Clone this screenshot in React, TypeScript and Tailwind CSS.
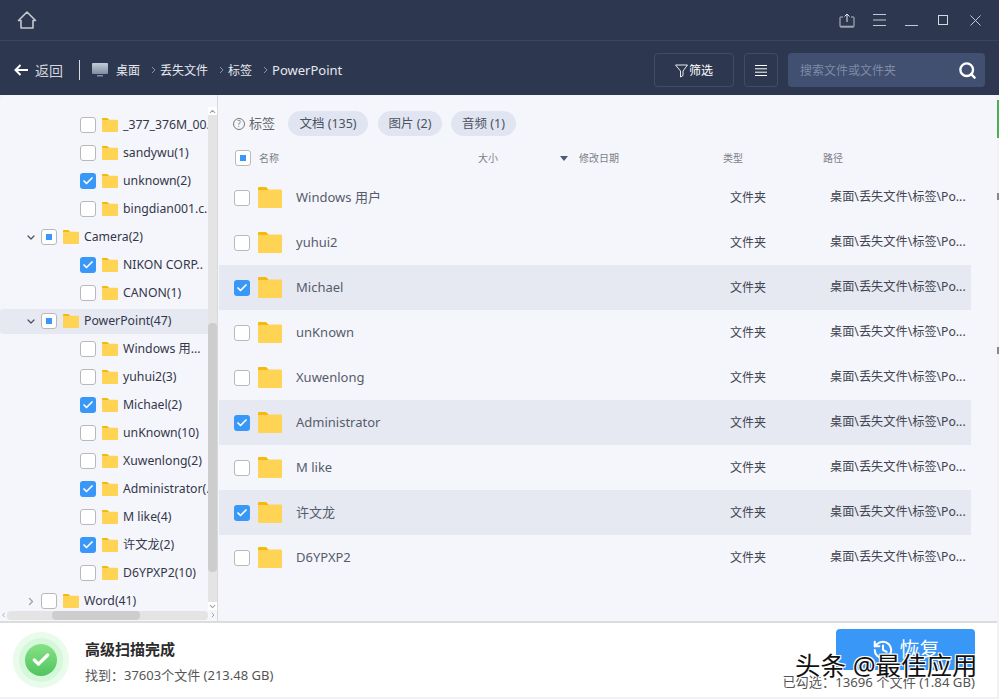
import { Check, ChevronDown, ChevronLeft, ChevronRight, ChevronUp, History, Search } from 'lucide-react';

type CheckState = 'none' | 'checked' | 'partial';
type TreeRow = { name: string; check: CheckState; parent?: boolean; open?: boolean; active?: boolean };

const treeRows: TreeRow[] = [
  { name: '_377_376M_00.', check: 'none' },
  { name: 'sandywu(1)', check: 'none' },
  { name: 'unknown(2)', check: 'checked' },
  { name: 'bingdian001.c.', check: 'none' },
  { name: 'Camera(2)', check: 'partial', parent: true, open: true },
  { name: 'NIKON CORP..', check: 'checked' },
  { name: 'CANON(1)', check: 'none' },
  { name: 'PowerPoint(47)', check: 'partial', parent: true, open: true, active: true },
  { name: 'Windows 用...', check: 'none' },
  { name: 'yuhui2(3)', check: 'none' },
  { name: 'Michael(2)', check: 'checked' },
  { name: 'unKnown(10)', check: 'none' },
  { name: 'Xuwenlong(2)', check: 'none' },
  { name: 'Administrator(.', check: 'checked' },
  { name: 'M like(4)', check: 'none' },
  { name: '许文龙(2)', check: 'checked' },
  { name: 'D6YPXP2(10)', check: 'none' },
  { name: 'Word(41)', check: 'none', parent: true },
];

const fileRows = [
  { name: 'Windows 用户', checked: false },
  { name: 'yuhui2', checked: false },
  { name: 'Michael', checked: true },
  { name: 'unKnown', checked: false },
  { name: 'Xuwenlong', checked: false },
  { name: 'Administrator', checked: true },
  { name: 'M like', checked: false },
  { name: '许文龙', checked: true },
  { name: 'D6YPXP2', checked: false },
];

function Box({ state }: { state: CheckState }) {
  if (state === 'checked') {
    return (
      <span className="flex h-4 w-4 shrink-0 items-center justify-center rounded-[3px] bg-[#3997f7]">
        <Check size={12} strokeWidth={3.5} className="text-white" />
      </span>
    );
  }
  return (
    <span className="flex h-4 w-4 shrink-0 items-center justify-center rounded-[3px] border border-[#b9b9b9] bg-white">
      {state === 'partial' && <span className="h-[6px] w-[6px] bg-[#3997f7]" />}
    </span>
  );
}

function Folder({ width, height }: { width: number; height: number }) {
  return (
    <svg width={width} height={height} viewBox="0 0 24 21" className="shrink-0">
      <path d="M0 1a1 1 0 0 1 1-1h7l3 3h-11z" fill="#f5b90c" />
      <path d="M0 3h10l2-.5 h11a1 1 0 0 1 1 1V20a1 1 0 0 1-1 1H1a1 1 0 0 1-1-1z" fill="#ffd454" />
    </svg>
  );
}

function Sep() {
  return (
    <svg width="5" height="8" viewBox="0 0 5 8" className="shrink-0">
      <path d="M1 1l3 3-3 3" fill="none" stroke="#8a93a8" strokeWidth="1" />
    </svg>
  );
}

function TitleBar() {
  return (
    <div className="flex h-[41px] items-center justify-between border-b border-[#39445e] pl-[17px] pr-2">
      <svg width="20" height="20" viewBox="0 0 20 20">
        <path d="M10 2L1.5 10.5H4V18h12v-7.5h2.500z" fill="none" stroke="#c4c8d0" strokeWidth="1.6" strokeLinejoin="round" />
      </svg>
      <div className="flex items-center">
        <span className="flex h-8 w-8 items-center justify-center">
          <svg width="16" height="15" viewBox="0 0 16 15">
            <path d="M4 4H1.500a.5.5 0 0 0-.5.5V13a1 1 0 0 0 1 1h12a1 1 0 0 0 1-1V4.500a.5.500 0 0 0-.5-.5H12" fill="none" stroke="#b9bdc7" strokeWidth="1" />
            <path d="M1 13.500h14" stroke="#9ea3af" strokeWidth="1.600" />
            <path d="M8 9V1M5.500 3.500L8 1l2.500 2.500" fill="none" stroke="#e3e5ea" strokeWidth="1" />
          </svg>
        </span>
        <span className="flex h-8 w-8 items-center justify-center">
          <svg width="13" height="12" viewBox="0 0 13 12">
            <path d="M0 .5h13M0 6h13M0 11.500h13" stroke="#c4c8d0" strokeWidth="1" />
          </svg>
        </span>
        <span className="flex h-8 w-8 items-center justify-center">
          <svg width="13" height="12" viewBox="0 0 13 12">
            <path d="M0 11.500h13" stroke="#c4c8d0" strokeWidth="1" />
          </svg>
        </span>
        <span className="flex h-8 w-8 items-center justify-center">
          <span className="h-[10px] w-[10px] border border-[#d5d8de]" />
        </span>
        <span className="flex h-8 w-8 items-center justify-center">
          <svg width="11" height="11" viewBox="0 0 11 11">
            <path d="M.5.5l10 10M10.500.5l-10 10" stroke="#c4c8d0" strokeWidth="1" />
          </svg>
        </span>
      </div>
    </div>
  );
}

function Toolbar() {
  return (
    <div className="flex h-[54px] items-center pl-[14px] pr-[14px] pt-1 text-[13px] text-[#e6e8ee]">
      <svg width="14" height="12" viewBox="0 0 14 12" className="shrink-0">
        <path d="M14 6H2M6.500 1L1.500 6l5 5" fill="none" stroke="#fff" strokeWidth="2" />
      </svg>
      <span className="ml-[7px] text-[14px] text-[#d3d6de]">返回</span>
      <span className="ml-4 h-[20px] w-px bg-[#d9dce3]" />
      <svg width="16" height="14" viewBox="0 0 16 14" className="ml-[12px] shrink-0">
        <defs>
          <linearGradient id="screen" x1="0" y1="0" x2="0" y2="1">
            <stop offset="0" stopColor="#c4ccd8" />
            <stop offset="1" stopColor="#7f8ca3" />
          </linearGradient>
        </defs>
        <rect width="16" height="11" rx="1" fill="url(#screen)" />
        <rect x="5" y="12" width="6" height="1.500" fill="#7f8ca3" />
      </svg>
      <span className="ml-[8px] mr-[11px] pt-px text-[12px]">桌面</span>
      <Sep />
      <span className="ml-[4px] mr-[11px] pt-px text-[12px]">丢失文件</span>
      <Sep />
      <span className="ml-[4px] mr-[11px] pt-px text-[12px]">标签</span>
      <Sep />
      <span className="ml-[4px] pt-px">PowerPoint</span>
      <div className="ml-auto flex items-center">
        <button type="button" className="flex h-[34px] w-20 items-center justify-center gap-[1px] rounded-[4px] border border-[#3f4b68] pt-px text-[12px] text-white">
          <svg width="13" height="14" viewBox="0 0 13 14">
            <path d="M.5 1h12L8 7v4.500L5.500 13V7z" fill="none" stroke="#e6e8ee" strokeWidth="1" />
          </svg>
          筛选
        </button>
        <button type="button" className="ml-[10px] flex h-[34px] w-[34px] items-center justify-center rounded-[4px] border border-[#3f4b68]">
          <svg width="12" height="11" viewBox="0 0 12 11">
            <path d="M0 .5h12M0 3.800h12M0 7.200h12M0 10.500h12" stroke="#fff" strokeWidth="1" />
          </svg>
        </button>
        <div className="ml-[10px] flex h-[34px] w-[197px] items-center justify-between rounded-[4px] bg-[#414f70] pl-3 pr-[8px]">
          <span className="pt-px text-[12px] text-[#7f8ba6]">搜索文件或文件夹</span>
          <Search size={19} strokeWidth={3} className="text-white" />
        </div>
      </div>
    </div>
  );
}

function TreeItem({ row }: { row: TreeRow }) {
  return (
    <div className="flex h-7 shrink-0 items-center">
      <div className={`flex h-[25px] w-full items-center ${row.parent ? 'pl-[25px]' : 'pl-[80px]'} ${row.active ? 'rounded-l-[3px] bg-[#e6e9f2]' : ''}`}>
        {row.parent && (
          <span className="mr-[4px] flex w-3 justify-center">
            {row.open ? (
              <ChevronDown size={13} strokeWidth={2.5} className="text-[#4b5263]" />
            ) : (
              <ChevronRight size={13} strokeWidth={2.5} className="text-[#a0a0a0]" />
            )}
          </span>
        )}
        <Box state={row.check} />
        <span className="ml-[6px]">
          <Folder width={16} height={14} />
        </span>
        <span className="ml-[5px] whitespace-nowrap text-[12.25px] text-[#33374a]">{row.name}</span>
      </div>
    </div>
  );
}

function TreePane() {
  return (
    <div className="flex w-[218px] shrink-0 flex-col border-r border-[#d9d9d9]">
      <div className="flex h-[515px]">
        <div className="flex min-w-0 flex-1 flex-col overflow-hidden pt-4">
          {treeRows.map((row) => (
            <TreeItem key={row.name} row={row} />
          ))}
        </div>
        <div className="flex w-[9px] shrink-0 flex-col pt-3">
          <span className="flex h-[8px] items-center justify-center bg-white">
            <ChevronUp size={9} strokeWidth={3} className="text-[#a5a5a5]" />
          </span>
          <div className="flex flex-1 flex-col bg-[#e4e4e4]">
            <span className="h-[208px]" />
            <span className="h-[249px] rounded-[4px] bg-[#cdcdcd]" />
          </div>
          <span className="flex h-[8px] items-center justify-center bg-white">
            <ChevronDown size={9} strokeWidth={3} className="text-[#a5a5a5]" />
          </span>
        </div>
      </div>
      <div className="flex h-[10px] items-center">
        <span className="flex w-[7px] justify-center">
          <ChevronLeft size={8} strokeWidth={3} className="text-[#a5a5a5]" />
        </span>
        <div className="h-[9px] w-[201px] rounded-[4px] bg-[#e4e4e4]">
          <div className="ml-[45px] h-[9px] w-[88px] rounded-[4px] bg-[#cdcdcd]" />
        </div>
        <span className="flex w-[9px] justify-center">
          <ChevronRight size={8} strokeWidth={3} className="text-[#a5a5a5]" />
        </span>
      </div>
    </div>
  );
}

function FileRow({ name, checked }: { name: string; checked: boolean }) {
  return (
    <div className={`flex h-[45px] items-center pl-[15px] ${checked ? 'bg-[#e6e9f2]' : ''}`}>
      <Box state={checked ? 'checked' : 'none'} />
      <span className="ml-2">
        <Folder width={24} height={21} />
      </span>
      <span className="ml-[14px] w-[434px] text-[13px] text-[#565c6c]">{name}</span>
      <span className="w-[100px] text-[12px] text-[#3f4450]">文件夹</span>
      <span className="w-[137px] whitespace-nowrap text-[12.2px] text-[#3f4450]">桌面\丢失文件\标签\Po...</span>
    </div>
  );
}

function ListPane() {
  return (
    <div className="ml-px min-w-0 flex-1">
      <div className="mt-4 flex h-[25px] items-center pl-[14px]">
        <svg width="12" height="12" viewBox="0 0 12 12" className="shrink-0">
          <circle cx="6" cy="6" r="5.500" fill="none" stroke="#777" strokeWidth="1" />
          <text x="6" y="9" textAnchor="middle" fontSize="8" fill="#777">?</text>
        </svg>
        <span className="ml-1 text-[13px] text-[#62676f]">标签</span>
        <span className="ml-[13px] flex h-[25px] w-20 items-center justify-center rounded-full bg-[#e1e5f2] pt-px text-[12.5px] text-[#4d5260]">文档 (135)</span>
        <span className="ml-[10px] flex h-[25px] w-16 items-center justify-center rounded-full bg-[#e1e5f2] pt-px text-[12.5px] text-[#4d5260]">图片 (2)</span>
        <span className="ml-[9px] flex h-[25px] w-[65px] items-center justify-center rounded-full bg-[#e1e5f2] pt-px text-[12.5px] text-[#4d5260]">音频 (1)</span>
      </div>
      <div className="mt-[5px] flex h-[34px] w-[752px] items-center pl-4 text-[10px] text-[#7b7f88]">
        <Box state="partial" />
        <span className="ml-2 w-[219px]">名称</span>
        <span className="w-[82px]">大小</span>
        <svg width="8" height="5" viewBox="0 0 8 5" className="shrink-0">
          <path d="M0 0h8L4 5z" fill="#4f5a73" />
        </svg>
        <span className="ml-[11px] w-[144px]">修改日期</span>
        <span className="w-[100px]">类型</span>
        <span>路径</span>
      </div>
      <div className="w-[752px]">
        {fileRows.map((row) => (
          <FileRow key={row.name} name={row.name} checked={row.checked} />
        ))}
      </div>
    </div>
  );
}

function Footer() {
  return (
    <div className="relative flex h-[76px] w-[997px] items-center border-t-2 border-[#dcdcdc] bg-white pl-[13px] pr-[22px]">
      <div className="flex h-14 w-14 shrink-0 items-center justify-center rounded-full bg-[#e9fbea]">
        <div className="flex h-11 w-11 items-center justify-center rounded-full bg-[#d6f8da]">
          <div className="flex h-8 w-8 items-center justify-center rounded-full bg-gradient-to-b from-[#86e286] to-[#4ec45f]">
            <Check size={20} strokeWidth={4} className="text-white" />
          </div>
        </div>
      </div>
      <div className="ml-4 mt-[3px]">
        <div className="text-[15px] font-bold leading-5 text-[#2b2b2b]">高级扫描完成</div>
        <div className="mt-[6px] text-[13px] leading-5 text-[#555]">找到：37603个文件 (213.48 GB)</div>
      </div>
      <div className="ml-auto mt-[6px] flex flex-col items-end self-start">
        <button type="button" className="flex h-[41px] w-[139px] items-center justify-center gap-[6px] rounded-[4px] bg-[#3997f7] text-[20px] text-white">
          <History size={22} strokeWidth={2.2} />
          恢复
        </button>
        <div className="mt-[3px] text-[13.2px] leading-[18px] text-[#555]">已勾选：13696 个文件 (1.84 GB)</div>
      </div>
      <span className="absolute left-[795px] top-[26px] text-[25.5px] leading-8 text-[#111] [text-shadow:1px_1px_0_#fff,-1px_-1px_0_#fff,1px_-1px_0_#fff,-1px_1px_0_#fff]">头条 @最佳应用</span>
    </div>
  );
}

export default function App() {
  return (
    <div className="h-[699px] w-[999px] overflow-hidden bg-[#2d3850] font-['Noto_Sans','Noto_Sans_CJK_SC',sans-serif]">
      <TitleBar />
      <Toolbar />
      <div className="flex h-[604px] bg-[#f1f2f5]">
        <div className="w-[997px] shrink-0">
          <div className="flex h-[526px] overflow-hidden rounded-t-[7px] bg-[#f5f6fb]">
            <TreePane />
            <ListPane />
          </div>
          <Footer />
        </div>
        <div className="flex flex-col">
          <span className="mt-[5px] h-[38px] w-[2px] bg-[#4caf50]" />
          <span className="mt-[55px] h-[7px] w-[2px] bg-[#888]" />
          <span className="mt-[147px] h-[7px] w-[2px] bg-[#888]" />
        </div>
      </div>
    </div>
  );
}
